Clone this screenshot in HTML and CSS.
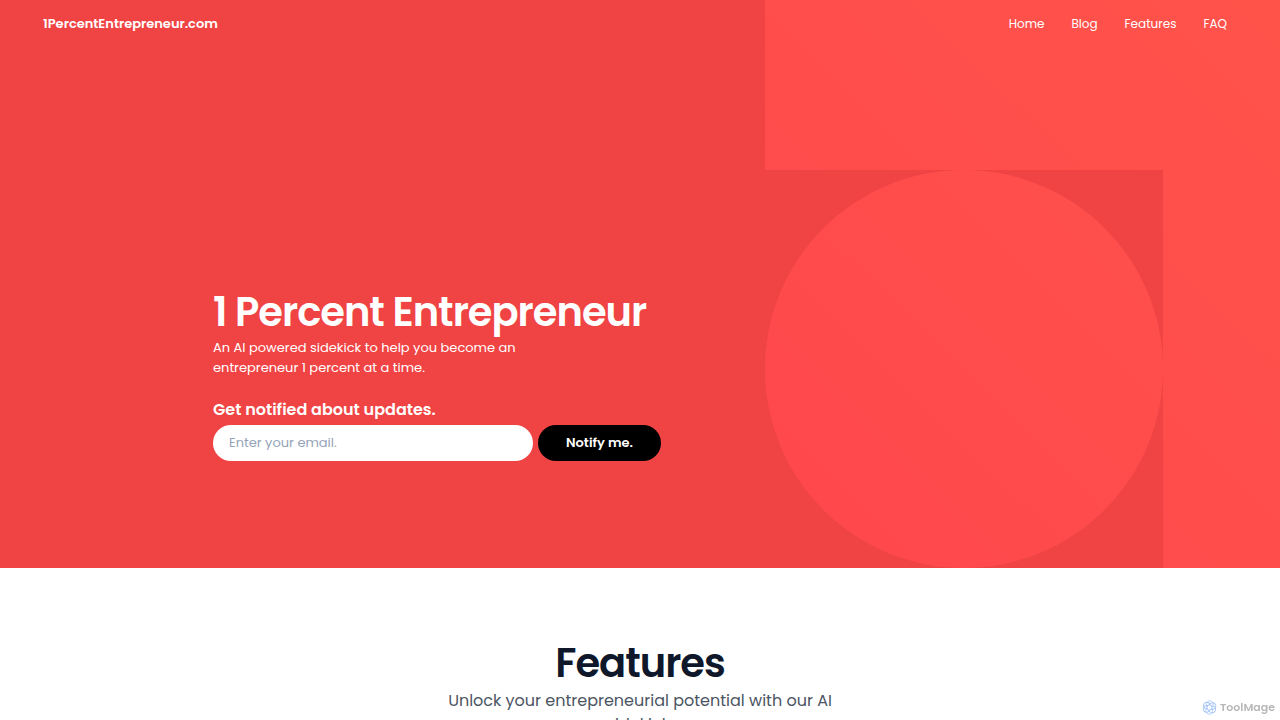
FILE: index.html
```
<!DOCTYPE html>
<html lang="en">
<head>
    <meta charset="UTF-8">
    <meta name="viewport" content="width=device-width, initial-scale=1.0">
    <title>1 Percent Entrepreneur</title>
    <link rel="stylesheet" href="styles.css">
</head>
<body>
    <header class="hero">
        <svg class="hero-art" viewBox="0 0 515 568" preserveAspectRatio="xMaxYMin slice" aria-hidden="true">
            <defs>
                <linearGradient id="glow" gradientUnits="userSpaceOnUse" x1="0" y1="541" x2="515" y2="26">
                    <stop offset="0" stop-color="#ff474d"/>
                    <stop offset="1" stop-color="#ff534a"/>
                </linearGradient>
            </defs>
            <path fill="url(#glow)" d="M0 0H515V568H398V170H0Z"/>
            <circle fill="url(#glow)" cx="199" cy="369" r="199"/>
        </svg>
        <nav class="navbar">
            <a class="brand" href="#">1PercentEntrepreneur.com</a>
            <ul class="nav-links">
                <li><a href="#">Home</a></li>
                <li><a href="#">Blog</a></li>
                <li><a href="#features">Features</a></li>
                <li><a href="#">FAQ</a></li>
            </ul>
        </nav>
        <div class="hero-content">
            <h1>1 Percent Entrepreneur</h1>
            <p>An AI powered sidekick to help you become an entrepreneur 1 percent at a time.</p>
            <form class="notify">
                <label for="email">Get notified about updates.</label>
                <div class="notify-row">
                    <input type="email" id="email" name="email" placeholder="Enter your email." required>
                    <button type="submit">Notify me.</button>
                </div>
            </form>
        </div>
    </header>

    <section class="features" id="features">
        <h2>Features</h2>
        <p>Unlock your entrepreneurial potential with our AI sidekick.</p>
    </section>

    <a class="badge" href="#">
        <svg viewBox="0 0 32 32" aria-hidden="true">
            <g fill="none" stroke="#a9c6f8" stroke-width="2">
                <path id="petal" d="M10 12C8 5 13 1 18 2C23 3 26 9 22 14C20 11 17 10 14 11"/>
                <use href="#petal" transform="rotate(60 16 16)"/>
                <use href="#petal" transform="rotate(120 16 16)"/>
                <use href="#petal" transform="rotate(180 16 16)"/>
                <use href="#petal" transform="rotate(240 16 16)"/>
                <use href="#petal" transform="rotate(300 16 16)"/>
            </g>
        </svg>
        <span>ToolMage</span>
    </a>
</body>
</html>
```
FILE: styles.css
```
* {
    box-sizing: border-box;
}
body {
    margin: 0;
    font-family: Poppins, Inter, sans-serif;
    color: #0f172a;
    background: #fff;
}
h1, h2, p, ul {
    margin: 0;
    padding: 0;
}
h1, h2 {
    margin-bottom: 3px;
    font-size: 40px;
    line-height: 46px;
    font-weight: 600;
    letter-spacing: -1px;
}
a {
    color: inherit;
    text-decoration: none;
}
.hero {
    position: relative;
    background: #f04444;
    color: #fff;
}
.hero-art {
    position: absolute;
    top: 0;
    right: 0;
    height: 100%;
}
.navbar {
    position: relative;
    display: flex;
    justify-content: space-between;
    align-items: center;
    height: 48px;
    padding: 0 53px 0 43px;
}
.brand {
    font-size: 13px;
    font-weight: 600;
}
.nav-links {
    display: flex;
    gap: 27px;
    list-style: none;
    font-size: 12px;
}
.hero-content {
    position: relative;
    padding: 241px 213px 107px;
}
.hero-content p {
    max-width: 320px;
    font-size: 13px;
    line-height: 20px;
}
.notify label {
    display: block;
    margin-top: 20px;
    font-size: 16px;
    line-height: 24px;
    font-weight: 600;
}
.notify-row {
    display: flex;
    gap: 5px;
    margin-top: 3px;
}
.notify input,
.notify button {
    height: 36px;
    border: none;
    border-radius: 18px;
    font-family: inherit;
    font-size: 13px;
}
.notify input {
    width: 320px;
    padding: 0 16px;
    background: #fff;
}
.notify input::placeholder {
    color: #94a3b8;
}
.notify button {
    padding: 0 28px;
    background: #000;
    color: #fff;
    font-weight: 600;
    cursor: pointer;
}
.features {
    padding: 72px 24px;
    text-align: center;
}
.features p {
    max-width: 400px;
    margin: 0 auto;
    color: #4b5563;
    font-size: 16px;
    line-height: 24px;
}
.badge {
    position: fixed;
    right: 5px;
    bottom: 5px;
    display: flex;
    align-items: center;
    gap: 3px;
    color: #b8b8b8;
    font-size: 11px;
    line-height: 16px;
    font-weight: 600;
}
.badge svg {
    width: 15px;
    height: 15px;
}
```
